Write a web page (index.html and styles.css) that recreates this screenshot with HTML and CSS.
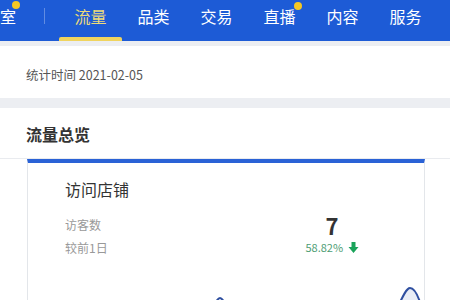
FILE: index.html
```html
<!DOCTYPE html>
<html lang="zh-CN">
<head>
    <meta charset="UTF-8">
    <meta name="viewport" content="width=device-width, initial-scale=1.0">
    <title>流量</title>
    <link rel="stylesheet" href="styles.css">
</head>
<body>
    <div class="nav">
        <div class="nav-first">室<span class="dot"></span></div>
        <div class="nav-divider"></div>
        <div class="nav-item active">流量</div>
        <div class="nav-item">品类</div>
        <div class="nav-item">交易</div>
        <div class="nav-item">直播<span class="dot"></span></div>
        <div class="nav-item">内容</div>
        <div class="nav-item">服务</div>
    </div>

    <div class="panel stat-time">统计时间 2021-02-05</div>

    <div class="panel overview">
        <div class="overview-title">流量总览</div>
        <div class="card">
            <div class="card-title">访问店铺</div>
            <div class="card-row">
                <div class="labels">
                    <div class="label">访客数</div>
                    <div class="label">较前1日</div>
                </div>
                <div class="values">
                    <div class="value">7</div>
                    <div class="change">58.82%
                        <svg class="arrow" width="11" height="11" viewBox="0 0 11 11">
                            <path d="M3.5 0 H7.5 V5 H10.5 L5.5 11 L0.5 5 H3.5 Z" fill="#1aa35a"/>
                        </svg>
                    </div>
                </div>
            </div>
            <svg class="chart" width="397" height="60" viewBox="0 0 397 60">
                <path d="M150 76 C176 76 185 31 192 31 C199 31 208 76 234 76 L340 76 C362 76 373 21 382 21 C391 21 400 60 397 70 Z" fill="#e9edf6"/>
                <path d="M150 76 C176 76 185 31 192 31 C199 31 208 76 234 76 L340 76 C362 76 373 21 382 21 C391 21 400 60 397 70" fill="none" stroke="#2f4fa0" stroke-width="2"/>
            </svg>
        </div>
    </div>
</body>
</html>
```

FILE: styles.css
```css
* {
    box-sizing: border-box;
    margin: 0;
    padding: 0;
}
body {
    font-family: 'Noto Sans CJK SC', 'Liberation Sans', sans-serif;
    background-color: #eceef2;
    height: 300px;
    overflow: hidden;
}
.nav {
    display: flex;
    align-items: flex-start;
    height: 41px;
    background-color: #1d5bd6;
    color: #ffffff;
    font-size: 16px;
    line-height: 32px;
}
.nav-first {
    position: relative;
    width: 16px;
}
.nav-divider {
    width: 1px;
    height: 16px;
    margin: 8px 0 0 28px;
    background-color: rgba(255, 255, 255, 0.3);
}
.nav-item {
    position: relative;
    width: 63px;
    height: 41px;
    text-align: center;
}
.nav-divider + .nav-item {
    margin-left: 14px;
}
.nav-item.active {
    color: #eedb78;
}
.nav-item.active::after {
    content: '';
    position: absolute;
    left: 0;
    right: 0;
    bottom: 0;
    height: 4px;
    border-radius: 2px 2px 0 0;
    background-color: #f0d45e;
}
.dot {
    position: absolute;
    width: 8px;
    height: 8px;
    border-radius: 50%;
    background-color: #f5c724;
    top: 1px;
}
.nav-first .dot {
    left: 12px;
}
.nav-item .dot {
    left: 46px;
    top: 2px;
}
.panel {
    background-color: #ffffff;
}
.stat-time {
    margin-top: 5px;
    height: 52px;
    padding: 20px 0 0 26px;
    font-size: 12.5px;
    line-height: 18px;
    color: #555555;
}
.overview {
    margin-top: 10px;
    height: 200px;
}
.overview-title {
    height: 51px;
    padding: 15px 0 0 26px;
    font-size: 16px;
    font-weight: bold;
    line-height: 22px;
    color: #333333;
    border-bottom: 1px solid #e9ebef;
}
.card {
    margin: 0 25px 0 27px;
    border: 1px solid #e3e6ea;
    border-top: 4px solid #2a62d6;
    height: 160px;
}
.card-title {
    padding: 15px 0 0 37px;
    font-size: 16px;
    line-height: 22px;
    color: #333333;
}
.card-row {
    display: flex;
    justify-content: space-between;
    margin-top: 13px;
}
.labels {
    padding-left: 37px;
}
.label {
    font-size: 12px;
    line-height: 23px;
    color: #999999;
}
.values {
    width: 80px;
    margin-right: 52px;
    text-align: center;
}
.value {
    font-size: 22px;
    font-weight: bold;
    line-height: 24px;
    color: #333333;
}
.change {
    font-size: 11px;
    line-height: 20px;
    color: #4c9c72;
}
.arrow {
    vertical-align: -1px;
    margin-left: 2px;
}
.chart {
    display: block;
    margin-top: 8px;
}
```
